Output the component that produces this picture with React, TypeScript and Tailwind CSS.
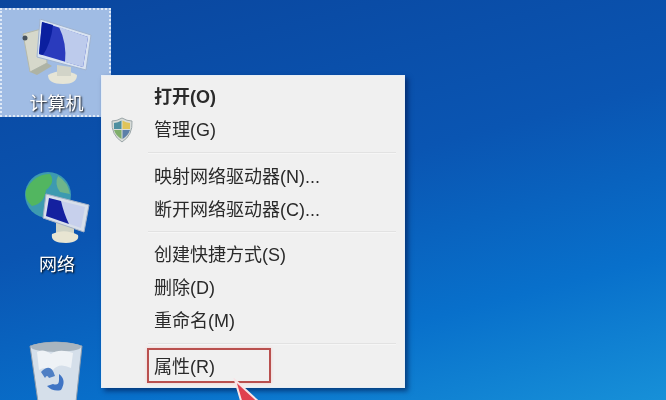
const font = { fontFamily: '"Liberation Sans", "Noto Sans CJK SC", sans-serif' }

function ComputerIcon() {
  return (
    <svg width="72" height="66" viewBox="0 0 72 66" className="blur-[0.5px]">
      <path d="M2 15 L24 9 L26 44 L9 53 Z" fill="#d6d8cb" stroke="#b4b8aa" />
      <circle cx="4" cy="19" r="2.5" fill="#47525c" />
      <path d="M9 53 L26 44 L31 47 L16 56 Z" fill="#aeb3a4" />
      <path d="M27 56 Q42 48 56 56 Q56 65 42 65 Q27 65 27 56 Z" fill="#e6e5d6" />
      <path d="M36 46 L50 48 L50 57 L36 57 Z" fill="#d2d4c8" />
      <path d="M19 0 L70 16 L65 51 L16 38 Z" fill="#d9e3f1" stroke="#9fb3cf" />
      <path d="M21 3 L67 18 L62 48 L18 35 Z" fill="#2a3bbd" />
      <path d="M38 8 L67 18 L62 48 L44 43 Q46 24 38 8 Z" fill="#bdcbec" />
      <path d="M21 3 L32 6 Q30 24 22 36 L18 35 Z" fill="#0b1f9f" />
    </svg>
  )
}

function NetworkIcon() {
  return (
    <svg width="66" height="72" viewBox="0 0 66 72" className="blur-[0.5px]">
      <circle cx="24" cy="23" r="23" fill="#3d9ab0" />
      <path d="M2 18 Q10 2 26 2 Q32 10 22 18 Q20 32 8 34 Q0 28 2 18 Z" fill="#52b660" />
      <path d="M34 4 Q44 10 46 22 L36 20 Q30 12 34 4 Z" fill="#6fb58a" />
      <path d="M32 50 L50 56 L50 64 L32 64 Z" fill="#cfd3c6" />
      <path d="M28 62 Q40 56 54 63 Q56 70 42 71 Q26 71 28 62 Z" fill="#e8e5d2" />
      <path d="M22 22 L65 33 L60 60 L19 46 Z" fill="#d8dfea" stroke="#a5b2c6" />
      <path d="M25 26 L61 35 L57 56 L22 44 Z" fill="#c7d0ec" />
      <path d="M25 26 L37 29 Q40 42 45 52 L22 44 Z" fill="#14209f" />
    </svg>
  )
}

function RecycleIcon() {
  return (
    <svg width="54" height="62" viewBox="0 0 54 62" className="blur-[0.5px]">
      <path d="M1 6 Q26 -2 53 6 L47 62 L9 62 Z" fill="#d5dfea" stroke="#8d9cad" />
      <ellipse cx="27" cy="7" rx="25" ry="5" fill="#a9b5bf" />
      <path d="M8 12 Q14 8 22 14 Q30 8 44 13 L42 28 Q30 22 24 30 Q16 26 10 30 Z" fill="#eef2f6" />
      <path d="M12 32 Q22 22 26 36 L20 38 Q18 34 16 38 Z" fill="#4f7fc4" />
      <path d="M30 34 Q38 40 32 50 Q24 52 18 46 L24 44 Q30 46 30 40 Z" fill="#3f74c4" />
    </svg>
  )
}

function ShieldIcon() {
  return (
    <svg width="22" height="26" viewBox="0 0 22 26" className="blur-[0.4px]">
      <path d="M11 1 Q16 4 21 4 Q22 18 11 25 Q0 18 1 4 Q6 4 11 1 Z" fill="#d8dcd8" stroke="#9aa5a8" />
      <path d="M3 6 Q7 5.5 10.5 3.5 L10.5 12 L3 12 Z" fill="#4d8fa0" />
      <path d="M11.5 3.5 Q15 5.5 19 6 L19 12 L11.5 12 Z" fill="#e0c45a" />
      <path d="M3 13 L10.5 13 L10.5 22 Q5 19 3 13 Z" fill="#7fae6a" />
      <path d="M11.5 13 L19 13 Q17 19 11.5 22 Z" fill="#5c7fa8" />
    </svg>
  )
}

function Label({ children }: { children: string }) {
  return (
    <span className="text-[18px] leading-5 text-white [text-shadow:1px_1px_2px_#000]">{children}</span>
  )
}

function Sep({ className }: { className: string }) {
  return <div className={`ml-[46px] mr-2 h-[2px] border-t border-[#e2e2e2] bg-[#f6f6f6] ${className}`} />
}

function Item({ label, icon, bold }: { label: string; icon?: boolean; bold?: boolean }) {
  return (
    <div className="flex h-[33px] items-center">
      <div className="w-[52px] shrink-0 pl-[9px]">{icon && <ShieldIcon />}</div>
      <span className={`text-[18px] leading-none text-[#2a2a2a] blur-[0.3px] ${bold ? 'font-bold' : ''}`}>{label}</span>
    </div>
  )
}

export default function App() {
  return (
    <div
      className="relative h-[400px] w-[666px] overflow-hidden bg-[linear-gradient(165deg,#0a469e_0%,#0a55b2_45%,#0870cb_75%,#1790d8_100%)]"
      style={font}
    >
      {/* selected icon */}
      <div className="absolute left-0 top-[8px] flex h-[109px] w-[111px] flex-col items-center border-2 border-dotted border-[#dfe9f6] bg-[#a0bce4]">
        <div className="mt-[9px] ml-[2px]">
          <ComputerIcon />
        </div>
        <div className="mt-[8px] ml-[2px] blur-[0.3px]">
          <Label>计算机</Label>
        </div>
      </div>

      <div className="absolute left-[22px] top-[172px] flex w-[70px] flex-col items-center">
        <NetworkIcon />
        <div className="mt-[10px] blur-[0.3px]">
          <Label>网络</Label>
        </div>
      </div>

      <div className="absolute left-[29px] top-[340px]">
        <RecycleIcon />
      </div>

      {/* context menu */}
      <div className="absolute left-[101px] top-[75px] h-[313px] w-[304px] border border-[#e6eef6] bg-[#f0f0f0] pt-[4px] shadow-[3px_3px_5px_rgba(0,20,70,0.6)]">
        <Item label="打开(O)" bold />
        <Item label="管理(G)" icon />
        <Sep className="mt-[6px] mb-[6px]" />
        <Item label="映射网络驱动器(N)..." />
        <Item label="断开网络驱动器(C)..." />
        <Sep className="mt-[5px] mb-[5px]" />
        <Item label="创建快捷方式(S)" />
        <Item label="删除(D)" />
        <Item label="重命名(M)" />
        <Sep className="mt-[6px] mb-[5px]" />
        <Item label="属性(R)" />
      </div>

      {/* red annotation */}
      <div className="absolute left-[147px] top-[348px] h-[35px] w-[124px] border-2 border-[#b9504e] shadow-[0_0_3px_#f4c8c8]" />
      <svg width="40" height="24" viewBox="0 0 40 24" className="absolute left-[232px] top-[378px]">
        <path d="M3 2 L10 26 L29 26 Z" fill="#e0404e" stroke="#f8e4e6" strokeWidth="2" />
      </svg>
    </div>
  )
}
